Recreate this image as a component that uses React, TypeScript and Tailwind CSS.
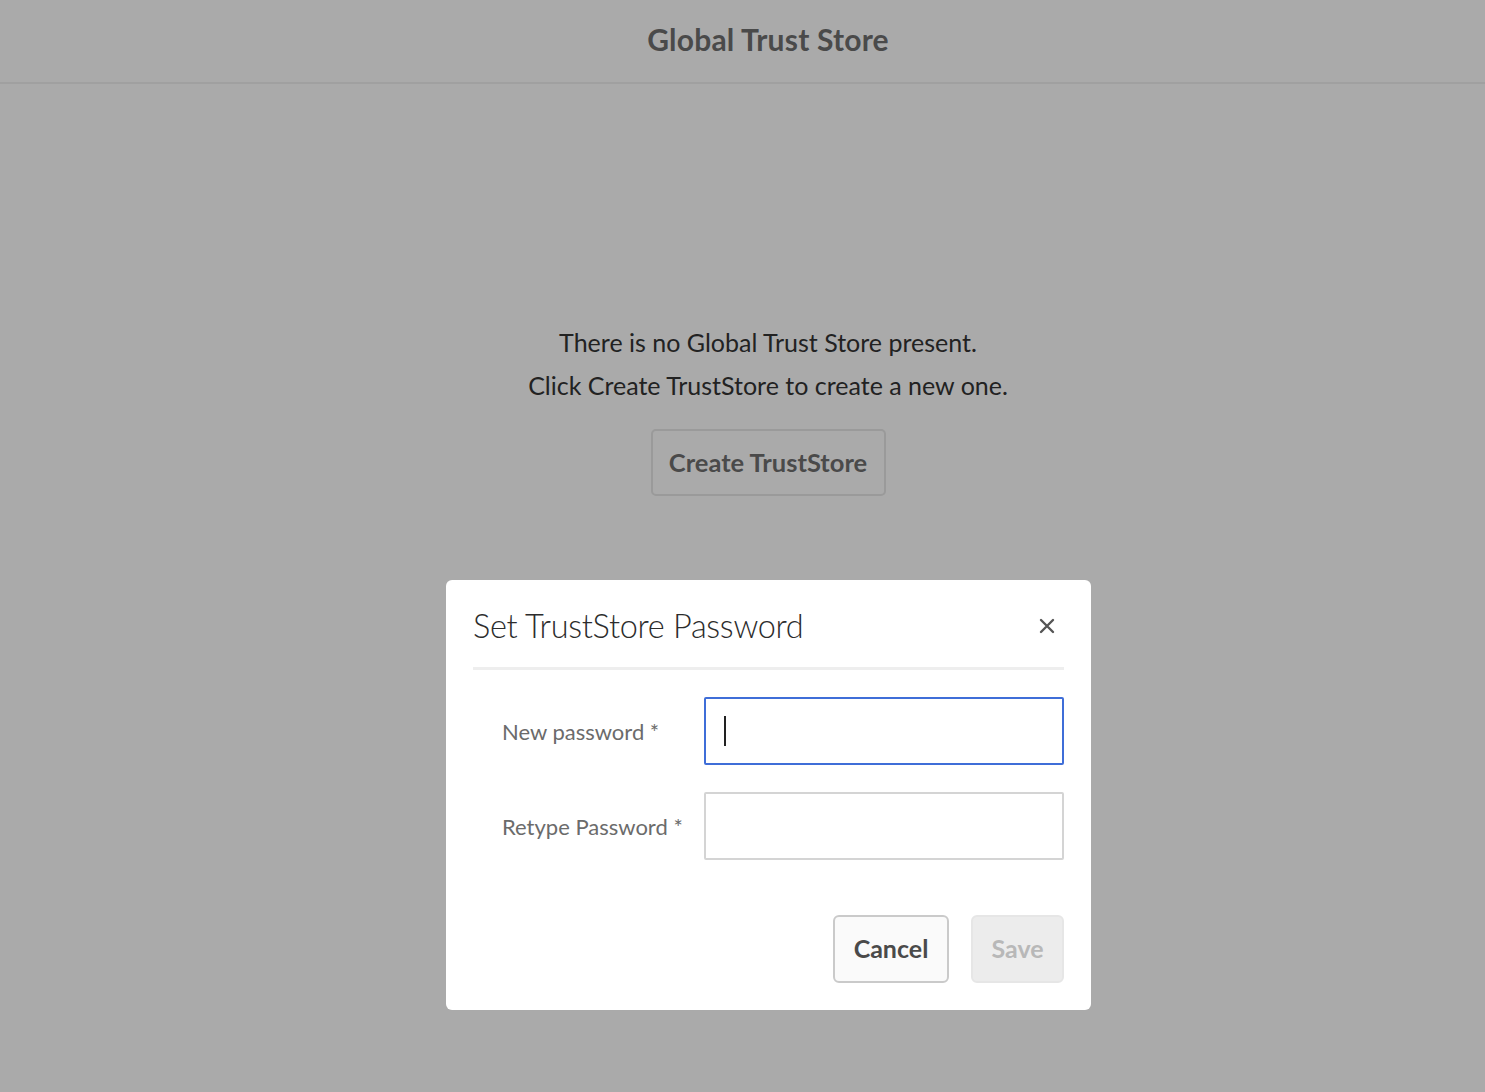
import React from "react";

export default function App() {
  return (
    <div
      className="relative w-full h-[1092px] bg-[#aaaaaa] overflow-hidden"
      style={{ fontFamily: 'Lato, "Open Sans", "Noto Sans", sans-serif' }}
    >
      <header className="h-[84px] border-b-2 border-[#a0a0a0] flex items-center">
        <div className="w-[1536px] shrink-0 flex justify-center pb-[4px]">
          <h1 className="text-[30px] font-bold text-[#4a4a4a] tracking-[0.2px]">Global Trust Store</h1>
        </div>
      </header>
      <main className="w-[1536px] flex flex-col items-center pt-[237px]">
        <p className="text-[25px] leading-[43px] text-[#222222]">There is no Global Trust Store present.</p>
        <p className="text-[25px] leading-[43px] text-[#222222]">Click Create TrustStore to create a new one.</p>
        <button className="mt-[22px] w-[235px] h-[67px] rounded-[5px] border-2 border-[#9a9a9a] text-[25.5px] font-bold text-[#4a4a4a]">
          Create TrustStore
        </button>
      </main>

      <div className="absolute left-[446px] top-[580px] w-[645px] h-[430px] bg-white rounded-[6px] px-[27px] pt-[20px]">
        <div className="flex items-center justify-between h-[52px]">
          <h2 className="text-[32.5px] font-light text-[#2c2c2c] tracking-[-0.3px]">Set TrustStore Password</h2>
          <svg width="18" height="18" viewBox="0 0 18 18" className="mr-[8px]">
            <path d="M3 3 L15 15 M15 3 L3 15" stroke="#555" strokeWidth="2.4" strokeLinecap="round" />
          </svg>
        </div>
        <div className="mt-[15px] h-[3px] bg-[#eeeeee]" />
        <div className="mt-[27px] flex flex-col gap-[27px]">
          <div className="flex items-center">
            <label className="w-[231px] pl-[29px] text-[22px] text-[#6b6b6b]">New password *</label>
            <div className="w-[360px] h-[68px] border-2 border-[#3f6ed8] rounded-[2px] flex items-center pl-[18px]">
              <div className="w-[2px] h-[30px] bg-[#222]" />
            </div>
          </div>
          <div className="flex items-center">
            <label className="w-[231px] pl-[29px] text-[22px] text-[#6b6b6b]">Retype Password *</label>
            <div className="w-[360px] h-[68px] border-2 border-[#d4d4d4] rounded-[2px]" />
          </div>
        </div>
        <div className="mt-[55px] flex justify-end gap-[22px]">
          <button className="w-[116px] h-[68px] rounded-[6px] border-2 border-[#cacaca] bg-[#fafafa] text-[25px] font-bold text-[#4a4a4a]">
            Cancel
          </button>
          <button className="w-[93px] h-[68px] rounded-[6px] border-2 border-[#e6e6e6] bg-[#ececec] text-[25px] font-bold text-[#b8b8b8]">
            Save
          </button>
        </div>
      </div>
    </div>
  );
}
